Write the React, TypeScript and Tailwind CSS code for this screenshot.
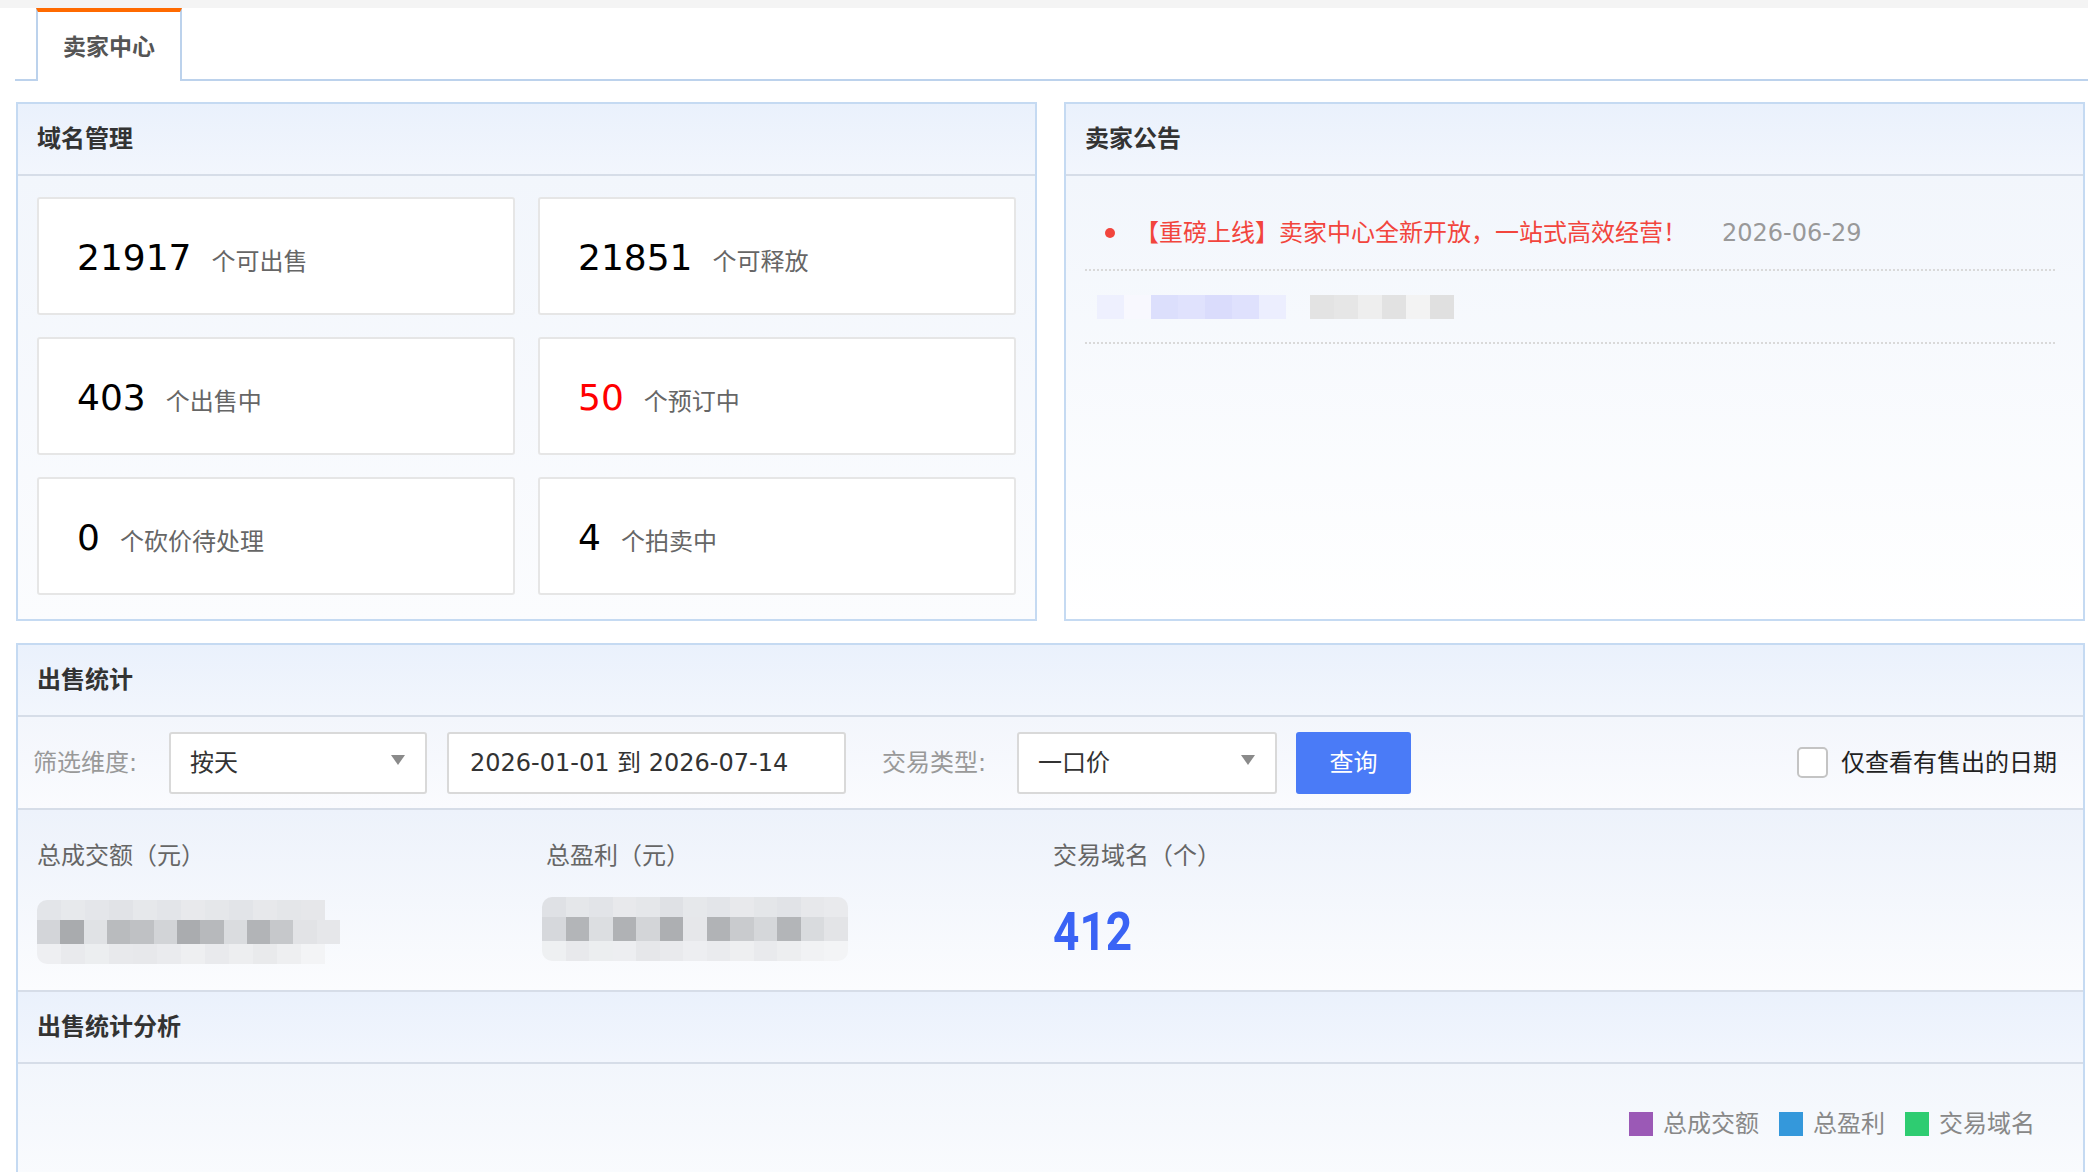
import React from "react";

const stats = [
  { value: "21917", unit: "个可出售" },
  { value: "21851", unit: "个可释放" },
  { value: "403", unit: "个出售中" },
  { value: "50", unit: "个预订中", red: true },
  { value: "0", unit: "个砍价待处理" },
  { value: "4", unit: "个拍卖中" },
];

// mosaic rows for the hidden amounts
const mosaicA = [
  ["#e3e5e9", "#e7e9ec", "#e4e6ea", "#e1e3e7", "#e6e8eb", "#e3e5e9", "#e8e9ec", "#e5e7ea", "#e2e4e8", "#e7e8eb", "#e4e6e9", "#e6e7ea"],
  ["#d3d5d9", "#a9abae", "#e0e2e5", "#b9bbbe", "#bfc1c4", "#d2d4d7", "#aaacaf", "#b7b9bc", "#dadcdf", "#b2b4b7", "#c6c8cb", "#e2e3e6", "#e6e7ea"],
  ["#eeeff2", "#e9eaed", "#eceef0", "#e8e9ec", "#e7e8eb", "#eaebee", "#eeeff1", "#e9eaed", "#edeef0", "#e9eaec", "#eeeff1", "#f3f4f6"],
];
const mosaicB = [
  ["#dfe1e5", "#e5e7ea", "#e2e4e8", "#e8e9ec", "#e5e7ea", "#dfe1e5", "#e6e8eb", "#e3e5e9", "#e8e9ec", "#e4e6e9", "#e1e3e7", "#e7e8eb", "#e9eaed"],
  ["#d6d8dc", "#b3b5b8", "#dcdee1", "#b0b2b5", "#d3d5d8", "#adafb2", "#e6e7ea", "#b1b3b6", "#c9cbce", "#d5d7da", "#b3b5b8", "#d9dbde", "#e3e4e7"],
  ["#eef0f2", "#e8e9ec", "#eceef0", "#edeef1", "#e6e7ea", "#e9eaed", "#edeef1", "#eaebee", "#eeeff1", "#e9eaed", "#edeef0", "#f1f2f4", "#f3f4f6"],
];

const lavender = ["#eef0fe", "#f8f8fe", "#dcdffc", "#e0e2fd", "#dadcfc", "#dfe1fd", "#eceefe"];
const grays = ["#e3e3e3", "#e6e6e6", "#eeeeee", "#e2e2e2", "#f3f3f3", "#e0e0e0"];

function Mosaic({ rows }: { rows: string[][] }) {
  return (
    <div className="flex flex-col overflow-hidden rounded-[10px]">
      {rows.map((row, i) => (
        <div key={i} className="flex">
          {row.map((c, j) => (
            <div
              key={j}
              className={i === 1 ? "h-[24px] w-[24px]" : "h-[20px] w-[24px]"}
              style={{ backgroundColor: c }}
            />
          ))}
        </div>
      ))}
    </div>
  );
}

function Caret() {
  return (
    <div className="mb-[6px] h-0 w-0 border-x-[7px] border-t-[10px] border-x-transparent border-t-[#8a8a8a]" />
  );
}

function PanelHeader({ title }: { title: string }) {
  return (
    <div className="flex h-[72px] items-center border-b-2 border-[#d6dde8] bg-linear-to-b from-[#eaf1fc] to-[#f2f6fd] pl-[19px] text-[24px] font-bold text-[#333]">
      {title}
    </div>
  );
}

export default function App() {
  return (
    <div
      className="h-[1172px] overflow-hidden bg-white"
      style={{ fontFamily: '"DejaVu Sans", "Noto Sans CJK SC", sans-serif' }}
    >
      <div className="h-[8px] bg-[#f4f4f4]" />

      {/* Tabs */}
      <div className="ml-[15px] flex h-[73px] items-end border-b-2 border-[#bcd2ec]">
        <div className="-mb-[2px] ml-[21px] flex h-[73px] w-[146px] items-center justify-center border-x-2 border-t-4 border-x-[#bcd2ec] border-t-[#ff6a00] bg-white pt-[2px] text-[23px] font-bold text-[#555]">
          卖家中心
        </div>
      </div>

      <div className="ml-[16px] mr-[3px] mt-[21px] flex flex-col gap-[22px]">
        {/* top row */}
        <div className="flex gap-[27px]">
          <div className="w-[1021px] border-2 border-[#c5daf2]">
            <PanelHeader title="域名管理" />
            <div className="grid grid-cols-2 gap-x-[23px] gap-y-[22px] bg-linear-to-b from-[#f2f6fc] to-[#fbfcfe] px-[19px] pb-[24px] pt-[21px]">
              {stats.map((s) => (
                <div
                  key={s.unit}
                  className="flex h-[118px] items-center rounded-[3px] border-2 border-[#e6e6e6] bg-white pl-[38px] pt-[4px]"
                >
                  <div className="flex items-baseline">
                    <span
                      className={
                        s.red
                          ? "text-[36px] leading-none text-[#ff0000]"
                          : "text-[36px] leading-none text-black"
                      }
                    >
                      {s.value}
                    </span>
                    <span className="ml-[20px] text-[24px] leading-none text-[#666]">{s.unit}</span>
                  </div>
                </div>
              ))}
            </div>
          </div>

          <div className="flex flex-1 flex-col border-2 border-[#c5daf2]">
            <PanelHeader title="卖家公告" />
            <div className="flex-1 bg-linear-to-b from-[#f2f6fc] to-white pl-[19px] pr-[28px] pt-[21px]">
              <div className="flex h-[74px] items-center border-b-2 border-dotted border-[#d9d9d9]">
                <div className="ml-[20px] h-[10px] w-[10px] rounded-full bg-[#f2453d]" />
                <span className="ml-[20px] text-[24px] text-[#f2453d]">
                  【重磅上线】卖家中心全新开放，一站式高效经营！
                </span>
                <span className="ml-[35px] text-[24px] text-[#999]">2026-06-29</span>
              </div>
              <div className="flex h-[73px] items-center border-b-2 border-dotted border-[#d9d9d9] pl-[12px]">
                <div className="flex h-[24px]">
                  {lavender.map((c, i) => (
                    <div key={i} className="h-full w-[27px]" style={{ backgroundColor: c }} />
                  ))}
                </div>
                <div className="ml-[24px] flex h-[24px]">
                  {grays.map((c, i) => (
                    <div key={i} className="h-full w-[24px]" style={{ backgroundColor: c }} />
                  ))}
                </div>
              </div>
            </div>
          </div>
        </div>

        {/* sales stats */}
        <div className="border-2 border-b-0 border-[#c5daf2]">
          <PanelHeader title="出售统计" />

          <div className="flex h-[93px] items-center border-b-2 border-[#d6dde8] bg-linear-to-b from-[#f3f6fc] to-[#fafbfe] pl-[15px] pr-[26px] text-[24px]">
            <span className="w-[136px] text-[#999]">筛选维度:</span>
            <div className="flex h-[62px] w-[258px] items-center justify-between rounded-[3px] border-2 border-[#d9d9d9] bg-white pl-[19px] pr-[20px] text-[#333]">
              <span>按天</span>
              <Caret />
            </div>
            <div className="ml-[20px] flex h-[62px] w-[399px] items-center rounded-[3px] border-2 border-[#d9d9d9] bg-white pl-[21px] text-[#333]">
              2026-01-01 到 2026-07-14
            </div>
            <span className="ml-[36px] w-[135px] text-[#999]">交易类型:</span>
            <div className="flex h-[62px] w-[260px] items-center justify-between rounded-[3px] border-2 border-[#d9d9d9] bg-white pl-[19px] pr-[20px] text-[#333]">
              <span>一口价</span>
              <Caret />
            </div>
            <button className="ml-[19px] flex h-[62px] w-[115px] items-center justify-center rounded-[3px] bg-[#4a7bf7] text-white">
              查询
            </button>
            <div className="ml-auto flex items-center">
              <div className="h-[31px] w-[31px] rounded-[5px] border-2 border-[#c4c4c4] bg-white" />
              <span className="ml-[13px] text-[#222]">仅查看有售出的日期</span>
            </div>
          </div>

          <div className="flex h-[180px] bg-linear-to-b from-[#edf2fb] to-[#fbfcfe] pl-[19px] pt-[31px]">
            <div className="w-[509px]">
              <div className="text-[24px] leading-[30px] text-[#666]">总成交额（元）</div>
              <div className="mt-[29px] w-[303px]">
                <Mosaic rows={mosaicA} />
              </div>
            </div>
            <div className="w-[507px]">
              <div className="text-[24px] leading-[30px] text-[#666]">总盈利（元）</div>
              <div className="-ml-[4px] mt-[26px] w-[306px]">
                <Mosaic rows={mosaicB} />
              </div>
            </div>
            <div>
              <div className="text-[24px] leading-[30px] text-[#666]">交易域名（个）</div>
              <div
                className="mt-[33px] inline-block origin-top scale-y-[1.18] text-[46px] font-bold leading-none text-[#3a63f5]"
                style={{ fontFamily: "Roboto, sans-serif" }}
              >
                412
              </div>
            </div>
          </div>

          <div className="border-t-2 border-[#d6dde8]">
            <PanelHeader title="出售统计分析" />
          </div>
          <div className="h-[200px] bg-linear-to-b from-[#f2f6fc] to-white pr-[48px] pt-[42px]">
            <div className="flex items-center justify-end text-[24px] text-[#888]">
              <div className="h-[24px] w-[24px] bg-[#9b59b6]" />
              <span className="ml-[10px]">总成交额</span>
              <div className="ml-[20px] h-[24px] w-[24px] bg-[#3498db]" />
              <span className="ml-[10px]">总盈利</span>
              <div className="ml-[20px] h-[24px] w-[24px] bg-[#2ecc71]" />
              <span className="ml-[10px]">交易域名</span>
            </div>
          </div>
        </div>
      </div>
    </div>
  );
}
